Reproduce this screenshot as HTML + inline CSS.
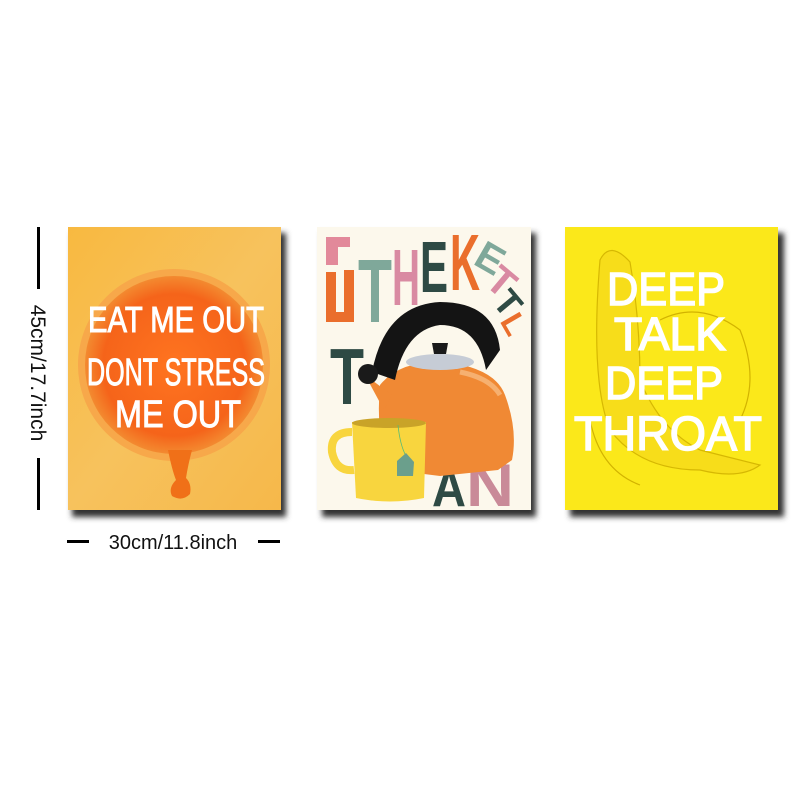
<!DOCTYPE html>
<html><head><meta charset="utf-8"><style>
html,body{margin:0;padding:0;background:#fff;width:800px;height:800px;overflow:hidden}
svg{display:block}
text{font-family:"Liberation Sans",sans-serif}
</style></head><body>
<svg width="800" height="800" viewBox="0 0 800 800" xmlns="http://www.w3.org/2000/svg">
<defs>
<filter id="sh" x="-10%" y="-10%" width="130%" height="130%"><feGaussianBlur stdDeviation="3"/></filter>
<radialGradient id="og" cx="0.5" cy="0.5" r="0.5"><stop offset="0" stop-color="#ff7420"/><stop offset="0.8" stop-color="#f5641a"/><stop offset="1" stop-color="#f38a30"/></radialGradient>
<linearGradient id="bg1" x1="0" y1="0" x2="1" y2="1"><stop offset="0" stop-color="#f8b940"/><stop offset="0.5" stop-color="#f7c25d"/><stop offset="1" stop-color="#f6b84a"/></linearGradient>
</defs>
<rect x="72" y="233" width="214" height="284" fill="#333" filter="url(#sh)"/>
<rect x="322" y="233" width="214" height="284" fill="#333" filter="url(#sh)"/>
<rect x="570" y="233" width="214" height="284" fill="#333" filter="url(#sh)"/>

<!-- panel 1 -->
<rect x="68" y="227" width="213" height="283" fill="url(#bg1)"/>
<circle cx="174" cy="365" r="96" fill="#f7a84a"/>
<circle cx="174" cy="365" r="89" fill="url(#og)"/>
<path d="M168 450 Q172 470 176 480 Q168 488 172 496 Q182 502 190 494 Q192 484 186 478 Q188 465 192 450 Z" fill="#f07018"/>
<g fill="#fff" text-anchor="middle" stroke="#fff" stroke-width="1">
<text x="176" y="332" font-size="36" textLength="176" lengthAdjust="spacingAndGlyphs">EAT ME OUT</text>
<text x="176" y="385" font-size="38" textLength="178" lengthAdjust="spacingAndGlyphs">DONT STRESS</text>
<text x="178" y="427" font-size="38" textLength="126" lengthAdjust="spacingAndGlyphs">ME OUT</text>
</g>

<!-- panel 2 -->
<rect x="317" y="227" width="214" height="283" fill="#fcf8ec"/>
<g font-weight="bold">
<rect x="326" y="237" width="12" height="28" fill="#e2899a"/><rect x="326" y="237" width="24" height="10" fill="#e2899a"/>
<rect x="326" y="272" width="10" height="50" fill="#ea6e2c"/><rect x="326" y="312" width="26" height="10" fill="#ea6e2c"/><rect x="344" y="270" width="10" height="52" fill="#ea6e2c"/>
<text x="358" y="322" font-size="90" fill="#7fa89a" textLength="34" lengthAdjust="spacingAndGlyphs">T</text>
<text x="392" y="305" font-size="80" fill="#d98aa2" textLength="28" lengthAdjust="spacingAndGlyphs">H</text>
<text x="420" y="292" font-size="72" fill="#2e4a44" textLength="28" lengthAdjust="spacingAndGlyphs">E</text>
<text x="450" y="290" font-size="80" fill="#ea6e2c" textLength="30" lengthAdjust="spacingAndGlyphs">K</text>
<text x="476" y="272" font-size="40" fill="#7fa89a" transform="rotate(30 490 260)">E</text>
<text x="490" y="294" font-size="40" fill="#d98aa2" transform="rotate(40 500 280)">T</text>
<text x="500" y="316" font-size="36" fill="#2e4a44" transform="rotate(50 510 300)">T</text>
<text x="508" y="334" font-size="32" fill="#ea6e2c" transform="rotate(60 515 320)">L</text>
<text x="330" y="404" font-size="80" fill="#2e4a44" textLength="34" lengthAdjust="spacingAndGlyphs">T</text>
<text x="432" y="506" font-size="52" fill="#2e4a44" textLength="34" lengthAdjust="spacingAndGlyphs">A</text>
<text x="466" y="506" font-size="60" fill="#c98a98" textLength="48" lengthAdjust="spacingAndGlyphs">N</text>
</g>
<path d="M380 385 Q400 360 445 362 Q495 368 505 395 Q518 430 512 460 L498 470 L440 476 L392 470 Q375 440 380 385 Z" fill="#f08934"/>
<path d="M365 375 L392 395 L384 410 Z" fill="#f08934"/>
<path d="M460 372 Q490 378 500 395" stroke="#f6b070" stroke-width="5" fill="none"/>
<ellipse cx="440" cy="362" rx="34" ry="8" fill="#c6ccd6"/>
<path d="M432 343 L448 343 L446 354 L434 354 Z" fill="#1a1a1a"/>
<path d="M372 372 Q385 305 440 302 Q495 302 500 350 L486 370 Q478 325 440 325 Q405 330 395 380 Z" fill="#141414"/>
<circle cx="368" cy="374" r="10" fill="#1a1a1a"/>
<path d="M352 422 L426 422 L424 498 Q390 505 356 498 Z" fill="#f8d53e"/>
<ellipse cx="389" cy="423" rx="37" ry="5" fill="#c9a328"/>
<path d="M352 432 Q330 432 332 452 Q336 472 354 470" stroke="#f8d53e" stroke-width="8" fill="none"/>
<path d="M398 425 Q400 445 406 456" stroke="#5b7" stroke-width="0.8" fill="none"/>
<path d="M397 461 L406 453 L414 462 L413 476 L397 476 Z" fill="#6b9f8c"/>

<!-- panel 3 -->
<rect x="565" y="227" width="213" height="283" fill="#fbe81a"/>
<path d="M600 260 Q610 240 630 262 Q640 320 640 380 Q660 430 700 450 Q740 460 760 465 Q740 480 700 470 Q640 470 610 430 Q590 380 600 260 Z" fill="#f7dc1a" stroke="#d2b300" stroke-width="1.2" opacity="0.9"/>
<path d="M660 320 Q700 300 740 330 Q760 380 740 420" fill="none" stroke="#d2b300" stroke-width="1.2"/>
<path d="M590 420 Q600 470 640 485" fill="none" stroke="#d2b300" stroke-width="1.2"/>
<g fill="#fff" text-anchor="middle" stroke="#fff" stroke-width="1.5">
<text x="666" y="305" font-size="46" textLength="118" lengthAdjust="spacingAndGlyphs">DEEP</text>
<text x="670" y="350" font-size="46" textLength="112" lengthAdjust="spacingAndGlyphs">TALK</text>
<text x="664" y="399" font-size="46" textLength="118" lengthAdjust="spacingAndGlyphs">DEEP</text>
<text x="668" y="450" font-size="48" textLength="188" lengthAdjust="spacingAndGlyphs">THROAT</text>
</g>

<rect x="37" y="227" width="3" height="62" fill="#000"/>
<rect x="37" y="458" width="3" height="52" fill="#000"/>
<text x="0" y="0" font-size="21" fill="#111" text-anchor="middle" transform="translate(31 373) rotate(90)">45cm/17.7inch</text>
<rect x="67" y="540" width="22" height="3" fill="#000"/>
<rect x="258" y="540" width="22" height="3" fill="#000"/>
<text x="173" y="549" font-size="20" fill="#111" text-anchor="middle">30cm/11.8inch</text>
</svg>
</body></html>
